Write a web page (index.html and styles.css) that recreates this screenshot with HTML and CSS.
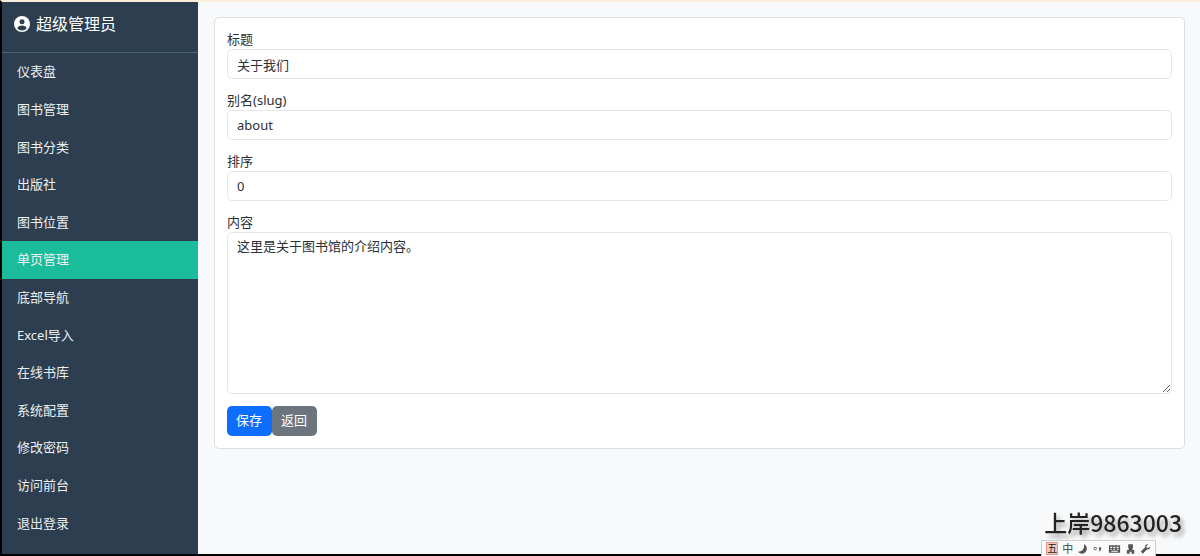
FILE: index.html
```html
<!DOCTYPE html>
<html lang="zh-CN">
<head>
    <meta charset="UTF-8">
    <meta name="viewport" content="width=device-width, initial-scale=1.0">
    <title>单页管理</title>
    <link rel="stylesheet" href="styles.css">
</head>
<body>
    <div class="layout">
        <aside class="sidebar">
            <div class="brand">
                <svg class="brand-icon" viewBox="0 0 16 16" aria-hidden="true">
                    <circle cx="8" cy="8" r="8" fill="#fff"/>
                    <circle cx="8" cy="5.8" r="2.5" fill="#2c3e50"/>
                    <path d="M3.4 12.4C4 10.2 5.4 9.4 8 9.4s4 .8 4.6 3c-1.2 1.3-2.8 2-4.600 2s-3.400-.7-4.600-2z" fill="#2c3e50"/>
                </svg>
                <span>超级管理员</span>
            </div>
            <nav class="menu">
                <a href="#">仪表盘</a>
                <a href="#">图书管理</a>
                <a href="#">图书分类</a>
                <a href="#">出版社</a>
                <a href="#">图书位置</a>
                <a href="#" class="active">单页管理</a>
                <a href="#">底部导航</a>
                <a href="#">Excel导入</a>
                <a href="#">在线书库</a>
                <a href="#">系统配置</a>
                <a href="#">修改密码</a>
                <a href="#">访问前台</a>
                <a href="#">退出登录</a>
            </nav>
        </aside>
        <main class="content">
            <form class="card">
                <div class="field">
                    <label for="title">标题</label>
                    <input type="text" id="title" class="form-control" value="关于我们">
                </div>
                <div class="field">
                    <label for="slug">别名(slug)</label>
                    <input type="text" id="slug" class="form-control" value="about">
                </div>
                <div class="field">
                    <label for="sort">排序</label>
                    <input type="text" id="sort" class="form-control" value="0">
                </div>
                <div class="field">
                    <label for="body">内容</label>
                    <textarea id="body" class="form-control form-text">这里是关于图书馆的介绍内容。</textarea>
                </div>
                <div class="actions">
                    <button type="submit" class="btn btn-primary">保存</button>
                    <a href="#" class="btn btn-secondary">返回</a>
                </div>
            </form>
        </main>
    </div>

    <div class="watermark">上岸9863003</div>
    <div class="ime-bar">
        <span class="ime-mode">五</span>
        <span class="ime-lang">中</span>
        <svg viewBox="0 0 12 12" aria-hidden="true"><path d="M7.500 1C11.500 3 11.500 8 8 10.300 5.500 11.700 2.500 11 1 8.800 5.500 9.200 8.200 6 7.500 1z"/></svg>
        <svg viewBox="0 0 12 12" aria-hidden="true"><circle cx="3.500" cy="5.500" r="1.300" fill="none" stroke="#555"/><path d="M7.500 4.200h2.300v2.300L8.300 8.500h-.9l.9-2h-.8z"/></svg>
        <svg class="ime-keys" viewBox="0 0 14 12" aria-hidden="true"><path fill-rule="evenodd" d="M1 2h12v8H1zM2.500 3.500v1.300h2V3.500zm3.300 0v1.300h2V3.500zm3.400 0v1.300h2.300V3.500zM2.500 5.800v1h1.500v-1zm3.300 0v1h2v-1zm3.900 0v1h1.800v-1zM3.500 8v1h7V8z"/></svg>
        <svg viewBox="0 0 12 12" aria-hidden="true"><path d="M3.500 1h5v4.500H8V7h2v4H7V9H5v2H2V7h2V5.500h-.5z"/></svg>
        <svg viewBox="0 0 12 12" aria-hidden="true"><path d="M11 3.200 9 5 7.200 4.600 6.900 3 8.900 1C7 .6 5.200 2 5.500 4.200L1 8.800 3 11l4.700-4.700C10 6.600 11.500 5 11 3.200z"/></svg>
    </div>
</body>
</html>
```
FILE: styles.css
```css
* {
    box-sizing: border-box;
}
body {
    margin: 0;
    font-family: "Noto Sans", "Noto Sans CJK SC", sans-serif;
    font-size: 13px;
    line-height: 19px;
    color: #2b3035;
    background-color: #f8f9fb;
}
.layout {
    display: flex;
    min-height: 100vh;
    border-top: 2px solid #faeedb;
    border-bottom: 2px solid #000;
    border-left: 2px solid #000;
}
.sidebar {
    display: flex;
    flex-direction: column;
    width: 196px;
    flex-shrink: 0;
    padding-bottom: 12px;
    background-color: #2c3e50;
}
.brand {
    display: flex;
    align-items: center;
    gap: 6px;
    height: 51px;
    padding: 0 12px 6px;
    border-bottom: 1px solid #4b6272;
    font-size: 16px;
    color: #fff;
}
.brand-icon {
    width: 16px;
    height: 16px;
}
.menu {
    display: flex;
    flex-direction: column;
    flex: 1;
}
.menu a {
    display: flex;
    flex: 1;
    align-items: center;
    padding: 0 15px;
    color: #ecf0f1;
    text-decoration: none;
}
.menu a:hover {
    background-color: #34495e;
}
.menu a.active {
    background-color: #1abc9c;
}
.content {
    flex: 1;
    padding: 15px 15px 15px 16px;
}
.card {
    display: flex;
    flex-direction: column;
    gap: 12px;
    padding: 12px;
    background-color: #fff;
    border: 1px solid #dedfe1;
    border-radius: 5px;
}
.field {
    display: flex;
    flex-direction: column;
}
.form-control {
    width: 100%;
    height: 30px;
    padding: 4px 9px;
    border: 1px solid #e4e6e9;
    border-radius: 5px;
    background-color: #fff;
    color: #2b3035;
    font: inherit;
}
.form-text {
    height: 162px;
    resize: vertical;
}
.form-control:focus {
    outline: none;
    border-color: #86b7fe;
}
.actions {
    display: flex;
}
.btn {
    height: 30px;
    padding: 5px 10px 6px 9px;
    border: 0;
    border-radius: 5px;
    color: #fff;
    font: inherit;
    text-decoration: none;
    cursor: pointer;
}
.btn-primary {
    background-color: #0d6efd;
}
.btn-secondary {
    background-color: #6c757d;
}
.watermark {
    position: fixed;
    right: 18px;
    bottom: 18px;
    font-family: "Noto Sans CJK SC", sans-serif;
    font-size: 23px;
    font-weight: 500;
    line-height: 32px;
    color: #222;
    text-shadow: 3px 4px 4px rgba(0, 0, 0, 0.35);
}
.ime-bar {
    position: fixed;
    right: 44px;
    bottom: 0;
    display: flex;
    align-items: center;
    gap: 4px;
    width: 115px;
    height: 16px;
    padding: 0 4px;
    border: 1px solid #ccc;
    border-bottom: 0;
    background-color: #fbfbfb;
    font-size: 11px;
    line-height: 14px;
    color: #444;
}
.ime-bar svg {
    width: 12px;
    height: 12px;
    fill: #555;
}
.ime-bar .ime-keys {
    width: 14px;
}
.ime-mode {
    width: 13px;
    height: 13px;
    border: 1px solid #e0988c;
    background-color: #f3c9c0;
    font-size: 10px;
    line-height: 11px;
    text-align: center;
    color: #222;
}
```
